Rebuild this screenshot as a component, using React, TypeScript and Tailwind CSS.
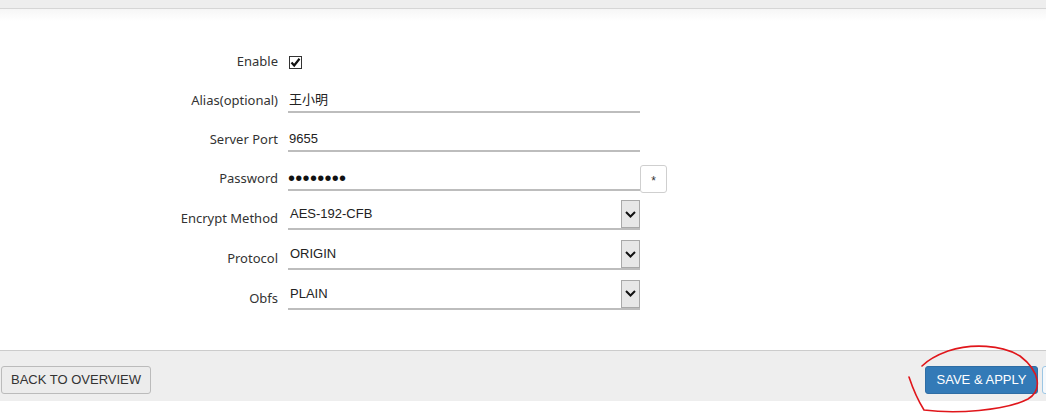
import React from 'react';

const labelFont = { fontFamily: '"Noto Sans", "Open Sans", sans-serif' };

function Row(props: { label: string; h: string; children: React.ReactNode }) {
  const { label, h, children } = props;
  return (
    <div className={`flex items-center ${h}`}>
      <div
        className="w-[288px] pr-[10px] text-right text-[13px] text-[#333]"
        style={labelFont}
      >
        {label}
      </div>
      {children}
    </div>
  );
}

function TextBox(props: { value: string }) {
  return (
    <div className="w-[352px] h-[24px] border-b-2 border-[#bdbdbd] flex items-center pl-[1px] text-[13px] text-[#222]">
      {props.value}
    </div>
  );
}

function SelectBox(props: { value: string }) {
  return (
    <div className="w-[352px] h-[30px] -mt-[8px] border-b-2 border-[#bdbdbd] flex">
      <div className="flex-1 flex items-center pl-[2px] text-[13px] text-[#222]">
        {props.value}
      </div>
      <div className="w-[19px] h-full bg-[#e7e7e7] border border-[#a9a9a9] flex items-center justify-center">
        <svg width="11" height="7" viewBox="0 0 11 7">
          <path d="M1 1 L5.5 5.5 L10 1" fill="none" stroke="#111" strokeWidth="2" />
        </svg>
      </div>
    </div>
  );
}

export default function App() {
  return (
    <div
      className="relative w-full h-[413px] bg-white flex flex-col overflow-hidden"
      style={{ fontFamily: '"Liberation Sans", Arial, "Noto Sans CJK SC", sans-serif' }}
    >
      <div className="h-[9px] bg-[#eeeeee] border-b border-[#d6d6d6]" />
      <div className="h-[12px] bg-gradient-to-b from-[#f6f6f6] to-white" />

      <div className="pt-[22px]">
        <Row label="Enable" h="h-[38px]">
          <span className="ml-[1px] w-[13px] h-[13px] border border-[#333] bg-white flex items-center justify-center">
            <svg width="11" height="11" viewBox="0 0 11 11">
              <path d="M1.5 5.5 L4.2 8.5 L9.5 1.8" fill="none" stroke="#111" strokeWidth="2.2" />
            </svg>
          </span>
        </Row>
        <Row label="Alias(optional)" h="h-[39px]">
          <TextBox value="王小明" />
        </Row>
        <Row label="Server Port" h="h-[39px]">
          <TextBox value="9655" />
        </Row>
        <Row label="Password" h="h-[40px]">
          <div className="w-[352px] h-[24px] border-b-2 border-[#bdbdbd] flex items-center text-[20px] leading-none text-[#111] tracking-[0.3px]">
            ••••••••
          </div>
          <button className="w-[27px] h-[28px] border border-[#cfcfcf] rounded-[3px] bg-white text-[12px] text-[#333] flex items-center justify-center pt-[3px]">
            *
          </button>
        </Row>
        <Row label="Encrypt Method" h="h-[40px]">
          <SelectBox value="AES-192-CFB" />
        </Row>
        <Row label="Protocol" h="h-[40px]">
          <SelectBox value="ORIGIN" />
        </Row>
        <Row label="Obfs" h="h-[39px]">
          <SelectBox value="PLAIN" />
        </Row>
      </div>

      <div className="flex-1" />

      <div className="h-[51px] bg-[#eeeeee] border-t border-[#cccccc] flex justify-between items-start pt-[15px] pl-[1px]">
        <button className="h-[28px] px-[9px] border border-[#bbbbbb] rounded-[3px] bg-[#ececec] text-[13px] text-[#333]">
          BACK TO OVERVIEW
        </button>
        <div className="flex gap-[4px] shrink-0 -mr-[56px]">
          <button className="h-[28px] w-[113px] border border-[#2e6da4] rounded-[3px] bg-[#337ab7] text-[13px] text-white">
            SAVE &amp; APPLY
          </button>
          <div className="h-[28px] w-[60px] border border-[#9cc6e4] rounded-[3px] bg-[#f6f9fc]" />
        </div>
      </div>
      <div className="h-[12px] bg-white" />

      <svg
        className="absolute inset-0 pointer-events-none"
        width="1046"
        height="413"
        viewBox="0 0 1046 413"
      >
        <path
          d="M909 377 C914 392, 919 402, 924 410 C955 414, 1005 411, 1028 399 C1042 391, 1041 372, 1020 356 C1002 345, 972 343, 948 351 C937 355, 928 360, 922 366"
          fill="none"
          stroke="#e0161b"
          strokeWidth="1.6"
          strokeLinecap="round"
        />
      </svg>
    </div>
  );
}
